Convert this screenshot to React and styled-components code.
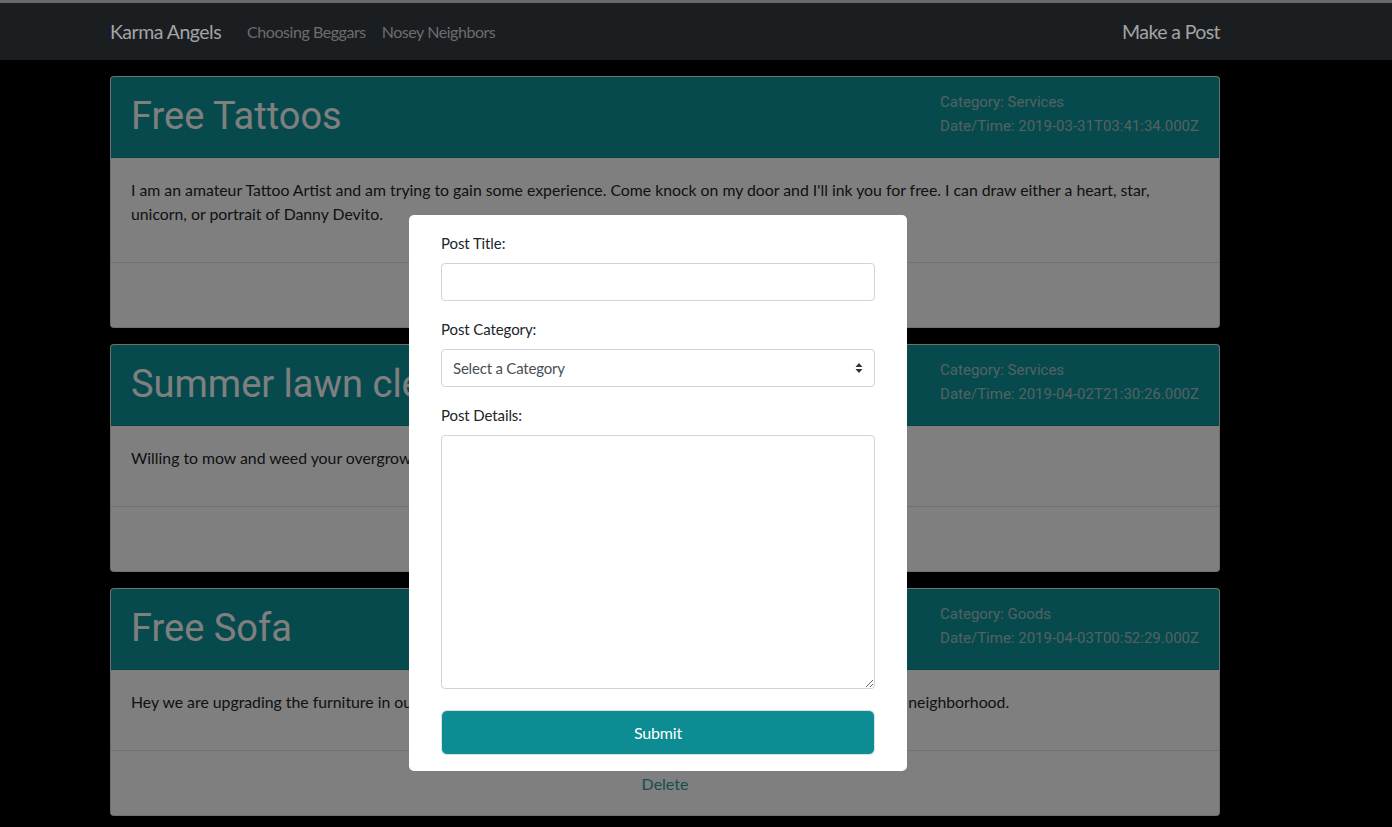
import React from 'react';
import styled, { createGlobalStyle } from 'styled-components';

const GlobalStyle = createGlobalStyle`
  * { box-sizing: border-box; }
  html, body {
    margin: 0;
    padding: 0;
    background: #000;
    font-family: Lato, "Liberation Sans", sans-serif;
    color: #212529;
  }
`;

const TopStrip = styled.div`
  height: 3px;
  background: #d4d4d4;
`;

const Navbar = styled.nav`
  position: relative;
  z-index: 20;
  height: 57px;
  background: #1b1e21;
  display: flex;
  align-items: center;
  padding: 0 172px 0 110px;
`;

const Brand = styled.a`
  font-size: 19.5px;
  color: #a3a4a5;
  letter-spacing: -0.5px;
  margin-right: 26px;
`;

const NavLink = styled.a`
  font-size: 16px;
  color: #6b6d6f;
  letter-spacing: -0.45px;
  margin-right: 16px;
`;

const NavRight = styled.a`
  margin-left: auto;
  font-size: 19.5px;
  color: #a3a4a5;
  letter-spacing: -0.6px;
`;

const Container = styled.main`
  width: 1110px;
  margin-left: 110px;
  padding-top: 16px;
  display: flex;
  flex-direction: column;
  gap: 16px;
`;

const Card = styled.section`
  background: #fff;
  border: 1px solid rgba(0, 0, 0, 0.125);
  border-radius: 4px;
  overflow: hidden;
`;

const CardHeader = styled.header`
  background: #0c949a;
  height: 81px;
  padding: 12px 20px;
  display: flex;
  justify-content: space-between;
  align-items: flex-start;
  border-bottom: 1px solid rgba(0, 0, 0, 0.125);
`;

const Title = styled.h1`
  margin: 0;
  padding-top: 3px;
  font-family: Roboto, "Liberation Sans", sans-serif;
  font-weight: 400;
  font-size: 38px;
  line-height: 48px;
  color: #fff;
`;

const Meta = styled.div`
  padding-top: 1px;
  font-family: Roboto, "Liberation Sans", sans-serif;
  font-size: 15px;
  line-height: 24px;
  color: #a9c3c4;
`;

const CardBody = styled.div`
  padding: 20px 26px 36px 20px;
  font-size: 15.8px;
  line-height: 24px;
  color: #212529;
`;

const CardFooter = styled.footer`
  height: 65px;
  border-top: 1px solid rgba(0, 0, 0, 0.125);
  display: flex;
  align-items: center;
  justify-content: center;
`;

const DeleteLink = styled.a`
  font-size: 16px;
  color: #2f9ca2;
  padding-top: 1px;
`;

const Backdrop = styled.div`
  position: fixed;
  inset: 0;
  z-index: 10;
  background: rgba(0, 0, 0, 0.5);
  padding: 215px 0 0 409px;
`;

const Dialog = styled.form`
  width: 498px;
  background: #fff;
  border-radius: 5px;
  padding: 16px 32px;
  display: flex;
  flex-direction: column;
`;

const Field = styled.div`
  display: flex;
  flex-direction: column;
  margin-bottom: 16px;
`;

const Label = styled.label`
  font-size: 15px;
  line-height: 24px;
  margin-bottom: 8px;
  color: #212529;
  letter-spacing: -0.1px;
`;

const Input = styled.input`
  height: 38px;
  border: 1px solid #ced4da;
  border-radius: 4px;
  font: inherit;
  padding: 6px 12px;
  background: #fff;
`;

const SelectBox = styled.div`
  height: 38px;
  border: 1px solid #ced4da;
  border-radius: 4px;
  display: flex;
  align-items: center;
  padding: 0 12px 0 11px;
  font-size: 15px;
  color: #495057;
  letter-spacing: -0.2px;
`;

const Arrows = styled.svg`
  margin-left: auto;
  margin-right: -1px;
`;

const TextArea = styled.textarea`
  height: 254px;
  border: 1px solid #ced4da;
  border-radius: 4px;
  font: inherit;
  padding: 6px 12px;
  resize: vertical;
`;

const SubmitButton = styled.button`
  margin-top: 5px;
  height: 45px;
  border: 1px solid #d6e4e5;
  border-radius: 6px;
  background: #0e8c94;
  color: #fff;
  font-family: Lato, "Liberation Sans", sans-serif;
  font-size: 16px;
  letter-spacing: -0.2px;
`;

const posts = [
  {
    title: 'Free Tattoos',
    category: 'Services',
    date: '2019-03-31T03:41:34.000Z',
    body: "I am an amateur Tattoo Artist and am trying to gain some experience. Come knock on my door and I'll ink you for free. I can draw either a heart, star, unicorn, or portrait of Danny Devito.",
  },
  {
    title: 'Summer lawn cleanup',
    category: 'Services',
    date: '2019-04-02T21:30:26.000Z',
    body: 'Willing to mow and weed your overgrown lawn this summer.',
  },
  {
    title: 'Free Sofa',
    category: 'Goods',
    date: '2019-04-03T00:52:29.000Z',
    body: 'Hey we are upgrading the furniture in our living room and would love to pass our old sofa along to anyone in the neighborhood.',
  },
];

const App = () => (
  <>
    <GlobalStyle />
    <TopStrip />
    <Navbar>
      <Brand>Karma Angels</Brand>
      <NavLink>Choosing Beggars</NavLink>
      <NavLink>Nosey Neighbors</NavLink>
      <NavRight>Make a Post</NavRight>
    </Navbar>

    <Container>
      {posts.map((p) => (
        <Card key={p.title}>
          <CardHeader>
            <Title>{p.title}</Title>
            <Meta>
              <div>Category: {p.category}</div>
              <div>Date/Time: {p.date}</div>
            </Meta>
          </CardHeader>
          <CardBody>{p.body}</CardBody>
          <CardFooter>
            <DeleteLink>Delete</DeleteLink>
          </CardFooter>
        </Card>
      ))}
    </Container>

    <Backdrop>
      <Dialog onSubmit={(e) => e.preventDefault()}>
        <Field>
          <Label>Post Title:</Label>
          <Input type="text" />
        </Field>
        <Field>
          <Label>Post Category:</Label>
          <SelectBox>
            Select a Category
            <Arrows width="8" height="12" viewBox="0 0 8 12">
              <path d="M4 1 L7.5 5 H0.5 Z M4 11 L0.5 7 H7.5 Z" fill="#333" />
            </Arrows>
          </SelectBox>
        </Field>
        <Field>
          <Label>Post Details:</Label>
          <TextArea />
        </Field>
        <SubmitButton type="submit">Submit</SubmitButton>
      </Dialog>
    </Backdrop>
  </>
);

export default App;
